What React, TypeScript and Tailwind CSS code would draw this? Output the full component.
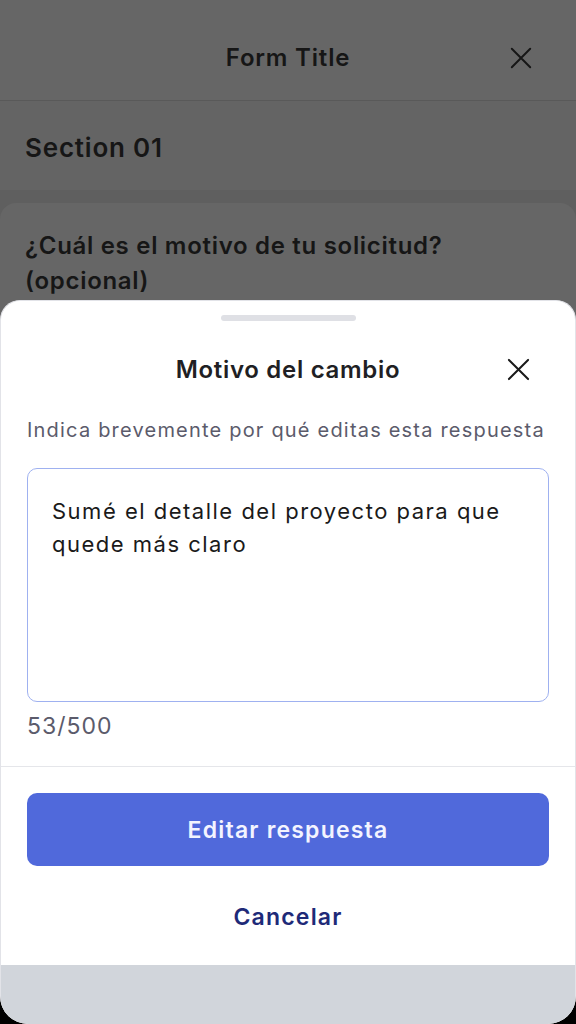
import { useState } from "react";

function CloseIcon({ className }: { className?: string }) {
  return (
    <svg viewBox="0 0 24 24" className={className} fill="none" stroke="currentColor" strokeWidth={1.8} strokeLinecap="round">
      <path d="M3.5 3.5l17 17M20.5 3.5l-17 17" />
    </svg>
  );
}

export default function App() {
  const [reason, setReason] = useState("Sumé el detalle del proyecto para que quede más claro");

  return (
    <div className="bg-black">
      <div className="relative h-[1024px] w-full overflow-hidden rounded-b-[28px] bg-[#5f5f5f] font-['Inter',sans-serif]">
        {/* page behind the overlay */}
        <div className="flex h-[101px] items-center justify-center border-b border-[#595959] bg-[#666666] pt-[15px]">
          <h1 className="text-[24px] font-semibold tracking-[0.8px] text-[#161616]">Form Title</h1>
          <CloseIcon className="absolute right-[42px] top-[45px] h-[26px] w-[26px] text-[#161616]" />
        </div>
        <div className="flex h-[89px] items-center bg-[#646464] px-[25px] pt-[3px]">
          <h2 className="text-[26px] font-semibold tracking-[0.8px] text-[#161616]">Section 01</h2>
        </div>
        <div className="bg-[#5f5f5f] pt-[13px]">
          <div className="h-[200px] rounded-t-[16px] bg-[#666666] px-[25px] pt-[25px]">
            <p className="text-[24px] font-semibold leading-[35px] tracking-[0.7px] text-[#161616]">
              ¿Cuál es el motivo de tu solicitud?
              <br />
              (opcional)
            </p>
          </div>
        </div>

        {/* bottom sheet */}
        <div className="absolute inset-x-0 bottom-0 top-[300px] flex flex-col overflow-hidden rounded-t-[20px] border-x border-t border-[#e2e3e8] bg-white">
          <div className="flex justify-center pt-[14px]">
            <div className="h-[6px] w-[135px] rounded-full bg-[#dfe0e5]" />
          </div>
          <div className="relative mt-[21px] flex h-[56px] items-center justify-center">
            <h3 className="text-[24px] font-semibold tracking-[0.7px] text-[#1f1f24]">Motivo del cambio</h3>
            <button className="absolute right-[43px] top-[14px] text-[#1a1a1a]">
              <CloseIcon className="h-[27px] w-[27px]" />
            </button>
          </div>
          <div className="px-[26px]">
            <p className="mt-[18px] text-[20px] leading-[28px] tracking-[1.2px] text-[#5b5b6b]">
              Indica brevemente por qué editas esta respuesta
            </p>
            <textarea
              value={reason}
              onChange={(e) => setReason(e.target.value)}
              maxLength={500}
              className="mt-[24px] block h-[234px] w-full resize-none rounded-[10px] border border-[#9fb1f0] px-[24px] pt-[26px] text-[22px] leading-[33px] tracking-[1.5px] text-[#1a1a1a] outline-none"
            />
            <p className="mt-[9px] pb-[25px] text-[23px] leading-[30px] tracking-[1px] text-[#5b5b6b]">
              {reason.length}/500
            </p>
          </div>
          <div className="h-px bg-[#e5e6ea]" />
          <div className="px-[26px]">
            <button className="mt-[26px] flex h-[73px] w-full items-center justify-center rounded-[10px] bg-[#5069db] pt-[2px] text-[23px] font-semibold tracking-[1.2px] text-[#f3f4ff]">
              Editar respuesta
            </button>
            <button className="mt-[22px] flex h-[56px] w-full items-center justify-center pt-[3px] text-[23px] font-semibold tracking-[1.2px] text-[#1e2a78]">
              Cancelar
            </button>
          </div>
          <div className="mt-auto h-[59px] bg-[#d1d5db]" />
        </div>
      </div>
    </div>
  );
}
